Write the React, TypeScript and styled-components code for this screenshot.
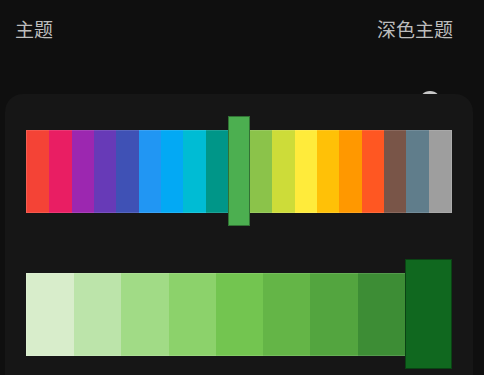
import React from 'react';
import styled, { createGlobalStyle } from 'styled-components';

const PALETTE = [
  '#F44336', '#E91E63', '#9C27B0', '#673AB7', '#3F51B5', '#2196F3', '#03A9F4',
  '#00BCD4', '#009688', '#4CAF50', '#8BC34A', '#CDDC39', '#FFEB3B', '#FFC107',
  '#FF9800', '#FF5722', '#795548', '#607D8B', '#9E9E9E',
];

const SHADES = [
  '#d8edcb', '#bce4aa', '#a1db86', '#8cd26b', '#73c550',
  '#64b547', '#53a53f', '#3d8d35', '#10681f',
];

const App: React.FC = () => (
  <>
    <GlobalStyle />
    <Page>
      <Header>
        <Label>主题</Label>
        <Label>深色主题</Label>
      </Header>

      <CardArea>
        <Knob />
        <Card>
          <SwatchRow>
            {PALETTE.map((c, i) => (
              <Swatch key={c} $color={c} $selected={i === 9} $first={i === 0} $last={i === PALETTE.length - 1} />
            ))}
          </SwatchRow>
          <SwatchRow>
            {SHADES.map((c, i) => (
              <Swatch key={c} $color={c} $selected={i === SHADES.length - 1} $first={i === 0} $last={i === SHADES.length - 1} />
            ))}
          </SwatchRow>
        </Card>
      </CardArea>
    </Page>
  </>
);

export default App;

/* ── Styles ───────────────────────────────────────── */

const GlobalStyle = createGlobalStyle`
  html, body {
    margin: 0;
    background: #0f0f0f;
    height: 100%;
    overflow: hidden;
  }
`;

const Page = styled.div`
  width: 484px;
  height: 375px;
  overflow: hidden;
  font-family: "Noto Sans CJK SC", "Noto Sans", sans-serif;
`;

const Header = styled.div`
  display: flex;
  align-items: center;
  justify-content: space-between;
  height: 56px;
  padding: 0 31px 0 15px;
`;

const Label = styled.span`
  font-size: 19px;
  line-height: 1;
  color: #bdbdbd;
`;

const CardArea = styled.div`
  position: relative;
  margin: 38px 11px 0 5px;
`;

const Knob = styled.div`
  position: absolute;
  top: -3px;
  right: 32px;
  width: 22px;
  height: 22px;
  border-radius: 50%;
  background: #c8c8c8;
`;

const Card = styled.div`
  position: relative;
  display: flex;
  flex-direction: column;
  gap: 33px;
  height: 320px;
  padding: 22px 21px;
  background: #161616;
  border-radius: 18px 18px 0 0;
`;

const SwatchRow = styled.div`
  display: flex;
  align-items: center;
  height: 110px;
`;

const Swatch = styled.div<{ $color: string; $selected: boolean; $first: boolean; $last: boolean }>`
  flex: 1;
  align-self: ${({ $selected }) => ($selected ? 'stretch' : 'auto')};
  height: ${({ $selected }) => ($selected ? 'auto' : '83px')};
  background: ${({ $color }) => $color};
  box-shadow: ${({ $selected }) =>
    $selected
      ? 'inset 0 0 0 1px rgba(0, 0, 0, 0.35)'
      : 'inset 0 1px 0 rgba(255,255,255,0.12), inset 0 -1px 0 rgba(255,255,255,0.12)'};
  border-left: ${({ $first }) => ($first ? '1px solid rgba(255,255,255,0.15)' : 'none')};
  border-right: ${({ $last, $selected }) => ($last && !$selected ? '1px solid rgba(255,255,255,0.15)' : 'none')};
`;
